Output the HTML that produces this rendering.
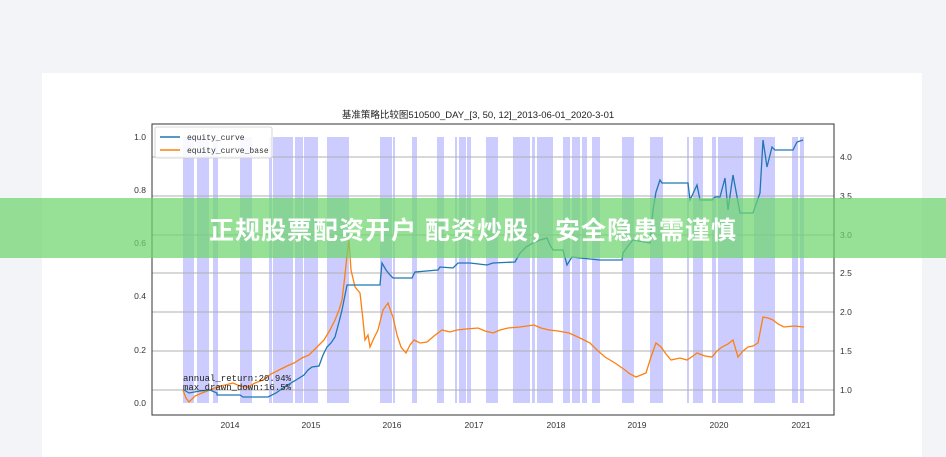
<!DOCTYPE html>
<html><head><meta charset="utf-8"><style>
html,body{margin:0;padding:0;}
body{width:946px;height:457px;background:#f3f4f8;position:relative;overflow:hidden;font-family:"Liberation Sans","Noto Sans CJK SC",sans-serif;}
.card{position:absolute;left:42px;top:73px;width:880px;height:384px;background:#fff;}
svg{position:absolute;left:0;top:0;}
.banner{position:absolute;left:0;top:198px;width:946px;height:60px;background:rgba(110,214,110,0.72);}
.banner span{position:absolute;left:0;width:946px;top:18px;text-align:center;color:#fff;font-weight:bold;font-size:25px;line-height:30px;letter-spacing:1px;font-family:"Liberation Sans","Noto Sans CJK SC",sans-serif;}
</style></head><body>
<div class="card"></div>
<svg width="946" height="457" viewBox="0 0 946 457" font-family="'Liberation Sans','Noto Sans CJK SC',sans-serif">
<text x="478" y="118" font-size="9.5" text-anchor="middle" fill="#222">基准策略比较图510500_DAY_[3, 50, 12]_2013-06-01_2020-3-01</text>
<g fill="rgba(0,0,255,0.2)">
<rect x="183" y="137" width="11" height="266"/><rect x="197" y="137" width="12" height="266"/><rect x="213" y="137" width="5" height="266"/><rect x="240" y="137" width="12" height="266"/><rect x="269" y="137" width="3" height="266"/><rect x="273" y="137" width="20" height="266"/><rect x="295" y="137" width="8" height="266"/><rect x="304" y="137" width="14" height="266"/><rect x="327" y="137" width="22" height="266"/><rect x="380" y="137" width="12" height="266"/><rect x="393" y="137" width="2" height="266"/><rect x="412" y="137" width="5" height="266"/><rect x="437" y="137" width="7" height="266"/><rect x="455" y="137" width="2" height="266"/><rect x="459" y="137" width="7" height="266"/><rect x="467" y="137" width="4" height="266"/><rect x="486" y="137" width="12" height="266"/><rect x="513" y="137" width="17" height="266"/><rect x="532" y="137" width="3" height="266"/><rect x="537" y="137" width="16" height="266"/><rect x="563" y="137" width="7" height="266"/><rect x="572" y="137" width="8" height="266"/><rect x="582" y="137" width="5" height="266"/><rect x="592" y="137" width="8" height="266"/><rect x="622" y="137" width="12" height="266"/><rect x="650" y="137" width="13" height="266"/><rect x="687" y="137" width="2" height="266"/><rect x="693" y="137" width="10" height="266"/><rect x="712" y="137" width="4" height="266"/><rect x="718" y="137" width="25" height="266"/><rect x="754" y="137" width="21" height="266"/><rect x="792" y="137" width="6" height="266"/><rect x="800" y="137" width="4" height="266"/>
</g>
<g stroke="#b0b0b0" stroke-width="1">
<line x1="152" y1="157" x2="834" y2="157"/><line x1="152" y1="196" x2="834" y2="196"/><line x1="152" y1="235" x2="834" y2="235"/><line x1="152" y1="273" x2="834" y2="273"/><line x1="152" y1="312" x2="834" y2="312"/><line x1="152" y1="351" x2="834" y2="351"/><line x1="152" y1="390" x2="834" y2="390"/>
</g>
<rect x="152" y="124" width="682" height="291" fill="none" stroke="#333" stroke-width="1"/>
<g font-size="8.5" fill="#333">
<text x="146" y="140" text-anchor="end">1.0</text><text x="146" y="193" text-anchor="end">0.8</text><text x="146" y="246" text-anchor="end">0.6</text><text x="146" y="299" text-anchor="end">0.4</text><text x="146" y="353" text-anchor="end">0.2</text><text x="146" y="406" text-anchor="end">0.0</text>
<text x="840" y="160">4.0</text><text x="840" y="199">3.5</text><text x="840" y="238">3.0</text><text x="840" y="276">2.5</text><text x="840" y="315">2.0</text><text x="840" y="354">1.5</text><text x="840" y="393">1.0</text>
<text x="230" y="428" text-anchor="middle">2014</text><text x="311" y="428" text-anchor="middle">2015</text><text x="392" y="428" text-anchor="middle">2016</text><text x="474" y="428" text-anchor="middle">2017</text><text x="556" y="428" text-anchor="middle">2018</text><text x="637" y="428" text-anchor="middle">2019</text><text x="719" y="428" text-anchor="middle">2020</text><text x="801" y="428" text-anchor="middle">2021</text>
</g>
<polyline fill="none" stroke="#ff7f0e" stroke-width="1.3" points="183,390 186,398 189,402 195,396 202,393 210,390 217,387 225,385 233,383 240,386 248,387 255,383 263,380 271,374 279,370 287,366 294,363 302,358 309,355 316,348 324,340 330,330 335,320 339,310 342,300 345,275 347,255 349,240 351,270 355,287 360,293 363,320 365,340 368,335 370,347 374,338 378,330 381,318 383,310 388,303 391,312 393,317 397,335 401,347 406,353 410,345 414,340 420,343 427,342 434,336 442,330 450,332 457,330 466,329 478,328 485,331 493,333 500,330 508,328 520,327 534,325 541,328 549,330 558,331 569,333 580,338 590,343 597,350 605,357 615,363 625,370 630,374 636,377 646,373 651,357 656,343 661,347 666,354 671,360 680,358 687,360 693,356 697,353 705,356 712,357 717,351 722,347 728,344 733,340 738,357 743,351 748,347 753,346 758,343 763,317 768,318 773,320 778,324 784,327 794,326 804,327"/>
<polyline fill="none" stroke="#1f77b4" stroke-width="1.3" points="184,390 189,393 200,391 210,390 217,393 217,395 240,395 243,397 268,397 276,393 286,386 296,380 304,375 308,370 312,367 319,366 323,355 327,347 331,343 335,337 339,322 342,310 345,295 347,285 350,285 380,285 382,263 386,270 390,275 393,278 412,278 415,272 438,270 440,267 453,268 458,263 470,263 487,265 493,263 515,262 520,253 526,247 533,243 540,240 547,238 550,245 553,250 563,250 567,265 572,257 580,258 600,260 622,260 623,253 628,246 633,240 650,243 653,210 656,192 660,180 662,183 688,183 690,200 697,185 700,200 712,200 715,197 720,197 725,178 728,210 733,175 740,213 753,213 760,193 763,140 767,167 772,147 775,150 793,150 797,142 803,140"/>
<rect x="155" y="127" width="117" height="31" fill="#fff" fill-opacity="0.85" stroke="#ccc" stroke-width="0.8" rx="2"/>
<line x1="160" y1="137" x2="180" y2="137" stroke="#1f77b4" stroke-width="1.5"/>
<line x1="160" y1="150" x2="180" y2="150" stroke="#ff7f0e" stroke-width="1.5"/>
<g font-size="8" fill="#333" font-family="'Liberation Mono',monospace"><text x="187" y="140">equity_curve</text><text x="187" y="153">equity_curve_base</text>
<text x="183" y="381" font-size="9" fill="#222">annual_return:20.94%</text><text x="183" y="390" font-size="9" fill="#222">max_drawn_down:16.5%</text></g>
</svg>
<div class="banner"><span>正规股票配资开户 配资炒股，安全隐患需谨慎</span></div>
</body></html>
